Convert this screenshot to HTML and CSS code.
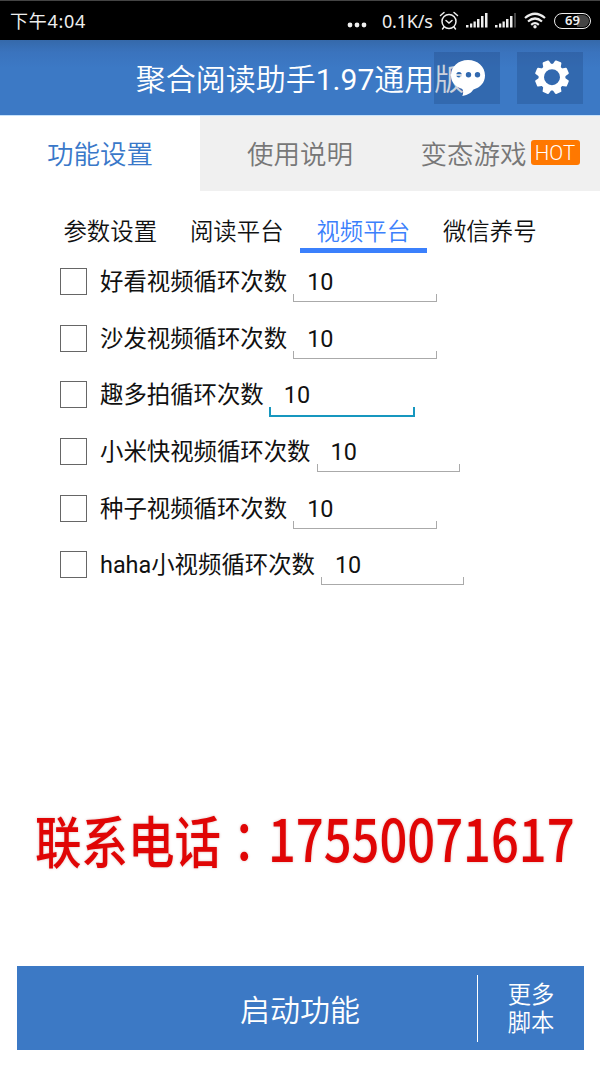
FILE: index.html
```html
<!DOCTYPE html>
<html lang="zh-CN">
<head>
<meta charset="utf-8">
<title>聚合阅读助手</title>
<link rel="stylesheet" href="styles.css">
</head>
<body>
<div class="status">
  <span class="time">下午4:04</span>
  <div class="status-right">
    <svg class="dots" width="20" height="6" viewBox="0 0 20 6" fill="#eee"><circle cx="3" cy="3" r="2.4"/><circle cx="10" cy="3" r="2.4"/><circle cx="17" cy="3" r="2.4"/></svg>
    <span class="speed">0.1K/s</span>
    <svg class="alarm" width="20" height="20" viewBox="0 0 20 20" fill="none" stroke="#eee" stroke-width="1.5" stroke-linecap="round"><circle cx="10" cy="10.5" r="7"/><path d="M7 9.5l3 2.5 3-2.5M1.5 4.5l3.5-3M18.500 4.500l-3.500-3M5 16l-1.500 2M15 16l1.500 2"/></svg>
    <svg class="signal" width="22" height="16" viewBox="0 0 22 16" fill="#eee"><path d="M0 13h2.500v2.500H0zM4 11.500h2.300v4H4zM7.500 9.500h2.300v6h-2.300zM11 7h2.500v8.500h-2.500zM15 4h2.500v11.500h-2.500zM19 1h2.500v14.500h-2.500z"/></svg>
    <svg class="signal second" width="22" height="16" viewBox="0 0 22 16" fill="#eee"><path d="M0 13h2.500v2.500H0zM4 11.500h2.300v4H4zM7.500 9.500h2.300v6h-2.300zM11 7h2.500v8.500h-2.500zM15 4h2.500v11.500h-2.500z"/><path fill="#444" d="M19 1h2v14.500h-2z"/></svg>
    <svg class="wifi" width="22" height="17" viewBox="0 0 22 17" fill="none" stroke="#eee" stroke-width="2.200"><path d="M1 6Q11-2.500 21 6M4 9.500Q11 3.500 18 9.500M7.200 12.800Q11 9.500 14.800 12.800"/><circle cx="11" cy="14.800" r="1.700" fill="#eee" stroke="none"/></svg>
    <span class="battery">69</span>
  </div>
</div>
<header class="header">
  <h1 class="title">聚合阅读助手<span class="version">1.97</span>通用版</h1>
  <div class="actions">
    <button class="action" aria-label="消息">
      <svg width="66" height="52" viewBox="0 0 66 52"><path fill="#fff" fill-rule="evenodd" d="M34 8c-9.800 0-17 6.600-17 15.500 0 6.200 4.200 11.200 11.300 13.500 1.300 2.500 1 4.500 0 7 6-1.200 9-3.500 11.200-6.600C46.500 35.500 51 30.500 51 23.500 51 14.600 43.800 8 34 8zM25 20a2.700 2.700 0 1 0 0 5.400 2.700 2.700 0 0 0 0-5.400zM34.500 20a2.700 2.700 0 1 0 0 5.400 2.700 2.700 0 0 0 0-5.400zM43.500 20a2.700 2.700 0 1 0 0 5.400 2.700 2.700 0 0 0 0-5.400z"/></svg>
    </button>
    <button class="action" aria-label="设置">
      <svg width="66" height="52" viewBox="0 0 66 52"><g transform="translate(35 25.200)"><circle r="10.700" fill="none" stroke="#fff" stroke-width="5.400"/><g fill="#fff"><path id="tooth" d="M-4.600-11l1.200-5.300q.2-.8 1-.8h4.800q.8 0 1 .8L4.600-11z" transform="rotate(22.500)"/><use href="#tooth" transform="rotate(45)"/><use href="#tooth" transform="rotate(90)"/><use href="#tooth" transform="rotate(135)"/><use href="#tooth" transform="rotate(180)"/><use href="#tooth" transform="rotate(225)"/><use href="#tooth" transform="rotate(270)"/><use href="#tooth" transform="rotate(315)"/></g></g></svg>
    </button>
  </div>
</header>
<nav class="tabs">
  <div class="tab active">功能设置</div>
  <div class="tab">使用说明</div>
  <div class="tab">变态游戏<span class="hot">HOT</span></div>
</nav>
<nav class="subtabs">
  <div class="subtab">参数设置</div>
  <div class="subtab">阅读平台</div>
  <div class="subtab active">视频平台</div>
  <div class="subtab">微信养号</div>
</nav>
<main class="list">
  <div class="row"><span class="check"></span><span class="label">好看视频循环次数</span><span class="field">10</span></div>
  <div class="row"><span class="check"></span><span class="label">沙发视频循环次数</span><span class="field">10</span></div>
  <div class="row"><span class="check"></span><span class="label">趣多拍循环次数</span><span class="field focused">10</span></div>
  <div class="row"><span class="check"></span><span class="label">小米快视频循环次数</span><span class="field">10</span></div>
  <div class="row"><span class="check"></span><span class="label">种子视频循环次数</span><span class="field">10</span></div>
  <div class="row"><span class="check"></span><span class="label">haha小视频循环次数</span><span class="field">10</span></div>
</main>
<div class="contact"><span class="contact-label">联系电话<span class="colon" lang="zh-TW">：</span></span><span class="contact-number">17550071617</span></div>
<footer class="footer">
  <div class="start">启动功能</div>
  <div class="divider"></div>
  <div class="more">更多<br>脚本</div>
</footer>
</body>
</html>
```
FILE: styles.css
```css
* { box-sizing: border-box; }
body {
  margin: 0;
  width: 600px;
  height: 1066px;
  overflow: hidden;
  display: flex;
  flex-direction: column;
  background: #fff;
  color: #111;
  font-family: Roboto, "Noto Sans CJK SC", sans-serif;
}
.status {
  height: 40px;
  flex: none;
  background: #000;
  border-top: 1px solid #444;
  color: #eee;
  display: flex;
  align-items: center;
  justify-content: space-between;
  padding: 0 9px 0 10px;
  font: 400 18px/38px "Noto Sans", "Noto Sans CJK SC", sans-serif;
}
.time { font-size: 18px; letter-spacing: .7px; }
.status-right { display: flex; align-items: center; }
.dots { margin: 9px 15px 0 0; }
.speed { width: 54px; white-space: nowrap; letter-spacing: -.2px; }
.alarm { margin: 0 7px 0 3px; }
.signal { margin-top: -2px; margin-right: 7px; }
.wifi { margin-right: 8px; }
.battery {
  width: 37px;
  height: 16px;
  border: 1.500px solid #eee;
  border-radius: 8px;
  background: linear-gradient(90deg, #000 0 64%, #444 64%);
  background-clip: content-box;
  padding: 1px;
  font: 600 13px/11px "Noto Sans", sans-serif;
  text-align: center;
}
.header {
  position: relative;
  height: 75px;
  flex: none;
  background: linear-gradient(#3569aa, #3a73bd 12px, #3c79c5 28px);
  color: #fff;
}
.title {
  margin: 0;
  font-size: 30px;
  font-weight: 350;
  line-height: 79px;
  text-align: center;
}
.version { font-weight: 400; }
.actions { position: absolute; right: 17px; top: 12px; display: flex; gap: 17px; }
.action { width: 66px; height: 52px; padding: 0; border: 0; background: rgba(20, 50, 100, .22); }
.action svg { display: block; }
.tabs {
  height: 76px;
  flex: none;
  display: grid;
  grid-template-columns: repeat(3, 200px);
  border-top: 1px solid #c7e2fb;
}
.tab {
  display: flex;
  align-items: center;
  justify-content: center;
  background: #f0f0f0;
  color: #777;
  font-size: 26.500px;
  font-weight: 350;
  padding-bottom: 2px;
}
.tab.active { background: #fff; color: #3978c9; }
.hot {
  width: 49px;
  height: 25px;
  margin: -1px 0 0 4px;
  border-radius: 3px;
  background: #ff7800;
  color: #fff;
  font: 350 20.500px/26px Roboto, sans-serif;
  text-align: center;
}
.subtabs {
  height: 62px;
  flex: none;
  padding: 20px 0 0 47px;
  display: flex;
  font-size: 23.400px;
  font-weight: 350;
}
.subtab { width: 126.500px; height: 42px; line-height: 42px; text-align: center; color: #111; }
.subtab.active { color: #3b80fc; border-bottom: 5px solid #3b80fc; }
.list { padding-left: 60px; flex: none; }
.row { height: 56.700px; display: flex; align-items: flex-start; }
.check { width: 27px; height: 27px; margin: 15px 13px 0 0; border: 1px solid #666; }
.label { font-size: 23.400px; line-height: 58px; white-space: nowrap; }
.field {
  position: relative;
  width: 143.500px;
  height: 49px;
  margin-left: 6px;
  padding-left: 14px;
  font-size: 23.400px;
  line-height: 58px;
}
.field::after {
  content: "";
  position: absolute;
  left: 0;
  right: 0;
  bottom: 0;
  height: 7px;
  border: 1px solid #aaa;
  border-top: 0;
}
.field.focused { width: 145px; height: 51px; }
.field.focused::after { left: -1px; height: 8px; border-width: 0 2px 2px; border-color: #1797bf; }
.contact {
  margin-top: 202px;
  height: 90px;
  flex: none;
  padding-left: 35px;
  display: flex;
  color: #e00505;
  font-family: "Noto Sans CJK SC", sans-serif;
  font-weight: 500;
  line-height: 90px;
  white-space: nowrap;
  text-shadow: 0 0 3px #dbbcbc;
}
.contact-label { width: 233px; font-size: 56px; line-height: 88px; transform: scaleX(.83); transform-origin: left; }
.colon { font-family: "Noto Sans CJK TC", sans-serif; }
.contact-number { font-size: 58px; line-height: 84px; transform: scaleX(.843); transform-origin: left; }
.footer {
  margin: auto 16px 16px 17px;
  height: 84px;
  flex: none;
  background: #3c79c5;
  color: #fff;
  display: grid;
  grid-template-columns: 460px 1px 106px;
  align-items: center;
  font-weight: 350;
}
.start { padding-left: 106px; text-align: center; font-size: 30px; }
.divider { height: 67px; background: #fff; }
.more { text-align: center; font-size: 23.300px; line-height: 28px; padding-top: 2px; }
```
